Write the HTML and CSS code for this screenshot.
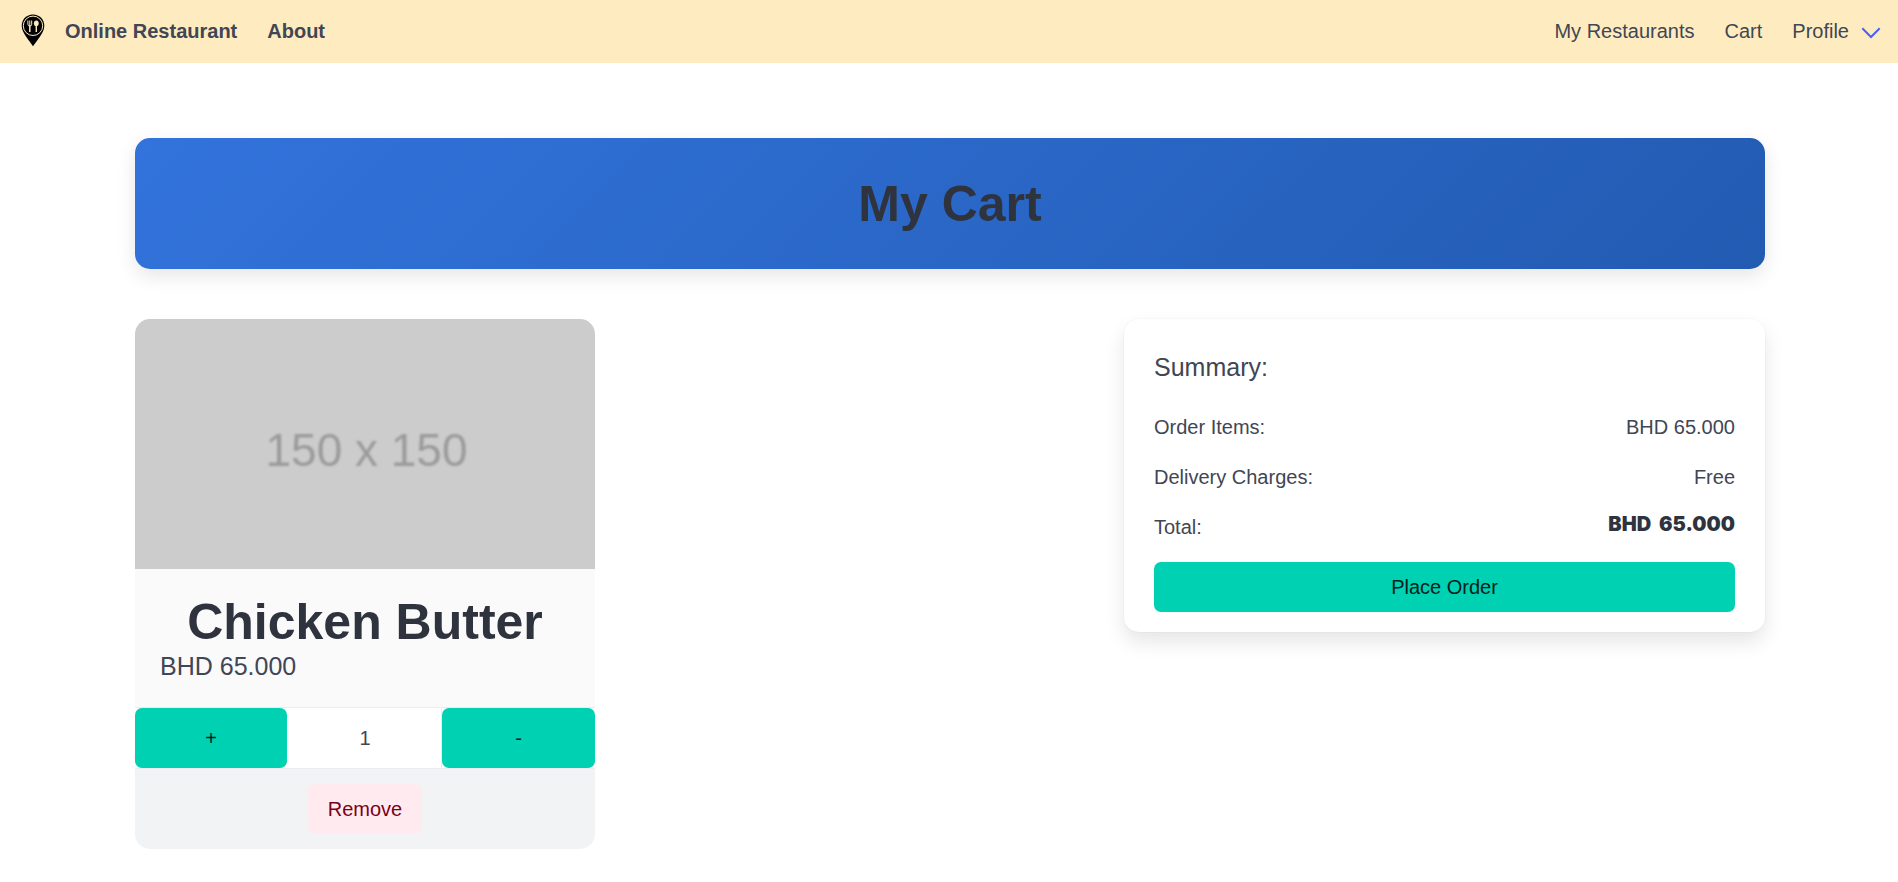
FILE: index.html
```html
<!DOCTYPE html>
<html lang="en">
<head>
<meta charset="utf-8">
<title>My Cart</title>
<link rel="stylesheet" href="styles.css">
</head>
<body>
<nav class="navbar">
  <svg class="logo" viewBox="0 0 24 33" width="24" height="33">
    <path d="M12 .5C5.300 .5 .7 5.600 .7 11.800c0 4.500 2.500 8.200 5.300 12.200L12 32.200l6-8.200c2.800-4 5.300-7.700 5.300-12.200C23.300 5.600 18.700.5 12 .5z" fill="#000"/>
    <circle cx="12" cy="11.800" r="9.700" fill="none" stroke="#feecc0" stroke-width="1"/>
    <path d="M6.900 6.500v3.700q0 1.800 1.900 1.800t1.900-1.800V6.500M8.800 6.500V12" fill="none" stroke="#feecc0" stroke-width="1"/>
    <path d="M8.800 11.500v6.500" stroke="#feecc0" stroke-width="1.500"/>
    <ellipse cx="15.300" cy="9.300" rx="2.400" ry="2.900" fill="#feecc0"/>
    <path d="M15.300 11.500v6.500" stroke="#feecc0" stroke-width="1.400"/>
  </svg>
  <a class="brand">Online Restaurant</a>
  <a class="brand">About</a>
  <div class="nav-end">
    <a>My Restaurants</a>
    <a>Cart</a>
    <a class="profile">Profile
      <svg width="20" height="13" viewBox="0 0 20 13"><path d="M1.300 1.300l8.700 8.700 8.700-8.700" fill="none" stroke="#485fff" stroke-width="2"/></svg>
    </a>
  </div>
</nav>
<main class="page">
  <header class="banner"><h1 class="title">My Cart</h1></header>
  <div class="columns">
    <article class="item">
      <div class="picture"><span>150 x 150</span></div>
      <div class="details">
        <h2 class="title">Chicken Butter</h2>
        <p class="price">BHD 65.000</p>
      </div>
      <div class="quantity">
        <button class="button">+</button>
        <span class="count">1</span>
        <button class="button">-</button>
      </div>
      <div class="item-footer"><button class="button remove">Remove</button></div>
    </article>
    <section class="summary">
      <h3 class="subtitle">Summary:</h3>
      <div class="line"><span>Order Items:</span><span>BHD 65.000</span></div>
      <div class="line"><span>Delivery Charges:</span><span>Free</span></div>
      <div class="line"><span>Total:</span><strong class="total">BHD 65.000</strong></div>
      <button class="button place">Place Order</button>
    </section>
  </div>
</main>
</body>
</html>
```
FILE: styles.css
```css
* { box-sizing: border-box; margin: 0; padding: 0; }
body {
  background: #fff;
  color: #404654;
  font: 20px/30px "Liberation Sans", Arial, sans-serif;
}
.navbar {
  display: flex;
  align-items: center;
  height: 63px;
  padding: 0 17px 2px 21px;
  background: #feecc0;
}
.logo { margin-right: 20px; }
.brand { margin-right: 30px; font-weight: 700; }
.nav-end { display: flex; gap: 30px; margin-left: auto; }
.profile { display: flex; align-items: center; gap: 12px; }
.profile svg { margin-top: 6px; }
.page { padding: 75px 133px 0 135px; }
.banner {
  height: 131px;
  padding-top: 38px;
  border-radius: 15px;
  background: linear-gradient(135deg, #3273dc, #225bb2);
  box-shadow: 0 7px 19px rgba(0, 0, 0, .1);
  text-align: center;
}
.title {
  color: #2e333d;
  font-size: 50px;
  line-height: 56px;
  font-weight: 700;
}
.columns {
  display: flex;
  align-items: flex-start;
  justify-content: space-between;
  margin-top: 50px;
}
.item {
  width: 460px;
  border-radius: 15px;
  overflow: hidden;
  background: #fff;
}
.picture {
  display: flex;
  align-items: center;
  justify-content: center;
  height: 250px;
  background: #ccc;
  color: #9b9b9b;
  font-size: 46px;
}
.picture span { filter: blur(.9px); padding: 11px 0 0 3px; }
.details { height: 138px; padding: 25px; background: #fafafa; }
.details .title { text-align: center; }
.price, .subtitle { font-size: 25px; font-weight: 400; }
.price { line-height: 32px; }
.quantity {
  display: grid;
  grid-template-columns: 152px 1fr 153px;
  height: 62px;
  border: solid #ebecef;
  border-width: 1px 0;
}
.count {
  padding-left: 2px;
  border-right: 1px solid #ebecef;
  text-align: center;
  line-height: 60px;
}
.button {
  border: 0;
  border-radius: 7px;
  background: #00d1b2;
  color: #001f1a;
  font: inherit;
}
.item-footer {
  display: flex;
  align-items: center;
  justify-content: center;
  height: 80px;
  background: #f2f3f5;
}
.remove {
  width: 114px;
  height: 50px;
  background: #ffebef;
  color: #7a0019;
}
.summary {
  display: flex;
  flex-direction: column;
  width: 641px;
  height: 313px;
  padding: 33px 30px 20px;
  border-radius: 15px;
  background: #fff;
  box-shadow: 0 10px 20px rgba(10, 10, 10, .1), 0 0 0 1px rgba(10, 10, 10, .02);
}
.subtitle { margin-bottom: 30px; }
.line { display: flex; justify-content: space-between; height: 50px; }
.total {
  margin-top: -3px;
  color: #2e333d;
  font-family: Inter, sans-serif;
  font-weight: 900;
  word-spacing: 4px;
}
.place { height: 50px; }
```
